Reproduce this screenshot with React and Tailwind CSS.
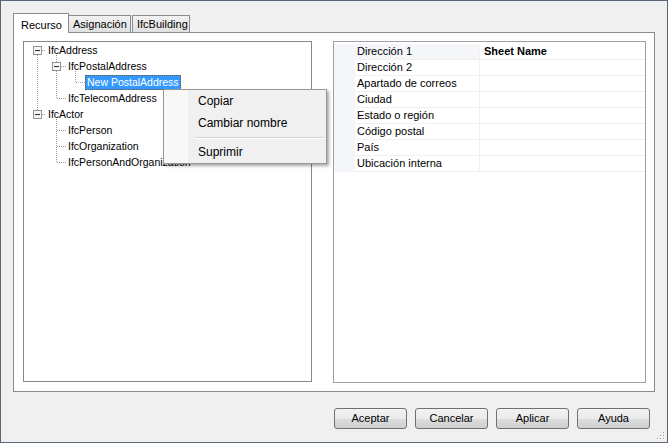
import React from 'react';

const treeRows = [
  { label: 'IfcAddress', level: 0 },
  { label: 'IfcPostalAddress', level: 1 },
  { label: 'New PostalAddress', level: 2, selected: true },
  { label: 'IfcTelecomAddress', level: 1 },
  { label: 'IfcActor', level: 0 },
  { label: 'IfcPerson', level: 1 },
  { label: 'IfcOrganization', level: 1 },
  { label: 'IfcPersonAndOrganization', level: 1 },
];

const levelMargin = ['ml-[22px]', 'ml-[42px]', 'ml-[61px]'];

const properties = [
  { name: 'Dirección 1', value: 'Sheet Name' },
  { name: 'Dirección 2' },
  { name: 'Apartado de correos' },
  { name: 'Ciudad' },
  { name: 'Estado o región' },
  { name: 'Código postal' },
  { name: 'País' },
  { name: 'Ubicación interna' },
];

const Expander = ({ x, y }) => (
  <g>
    <rect x={x + 0.5} y={y + 0.5} width="8" height="8" fill="#f7f7f7" stroke="#949494" />
    <line x1={x + 2} y1={y + 4.5} x2={x + 7} y2={y + 4.5} stroke="#1c2a44" />
  </g>
);

// dotted connectors of the tree, in coordinates of the tree's client area
const TreeLines = () => {
  const v = (x, y1, y2) => (
    <line x1={x + 0.5} y1={y1} x2={x + 0.5} y2={y2} stroke="#a0a0a0" strokeDasharray="1 1" />
  );
  const h = (y, x1, x2) => (
    <line x1={x1} y1={y + 0.5} x2={x2} y2={y + 0.5} stroke="#a0a0a0" strokeDasharray="1 1" />
  );
  return (
    <svg className="absolute left-0 top-0" width="287" height="200" shapeRendering="crispEdges">
      {v(13, 13, 68)}
      {h(8, 18, 22)}
      {h(72, 18, 22)}
      {v(32, 13, 20)}
      {v(32, 29, 57)}
      {h(24, 37, 42)}
      {h(56, 33, 42)}
      {v(51, 29, 41)}
      {h(40, 52, 61)}
      {v(32, 77, 121)}
      {h(88, 33, 42)}
      {h(104, 33, 42)}
      {h(120, 33, 42)}
      <Expander x={9} y={4} />
      <Expander x={28} y={20} />
      <Expander x={9} y={68} />
    </svg>
  );
};

const Button = ({ children }) => (
  <div className="flex h-[21px] w-[73px] items-center justify-center rounded-[3px] border border-[#707070] bg-[linear-gradient(to_bottom,#f2f2f2_0%,#ebebeb_50%,#dddddd_50%,#cfcfcf_100%)] text-[11px] text-black">
    {children}
  </div>
);

const App = () => {
  return (
    <div className="relative h-[443px] w-[668px] overflow-hidden border border-[#5a6776] bg-[#f0f0f0] pl-[12px] pt-[12px] font-['Liberation_Sans',Arial,sans-serif] text-black">
      <div className="relative z-10 flex h-[20px] items-end">
        <div className="flex h-[20px] w-[56px] items-start border border-b-0 border-[#898c95] bg-white pl-[7px] pt-[3px] text-[11px]">
          Recurso
        </div>
        <div className="mb-[1px] flex h-[17px] w-[62px] items-center border border-b-0 border-l-0 border-[#898c95] bg-[linear-gradient(to_bottom,#f2f2f2,#e0e0e0)] pl-[4px] text-[11px]">
          Asignación
        </div>
        <div className="mb-[1px] ml-[1px] flex h-[17px] w-[58px] items-center border border-b-0 border-[#898c95] bg-[linear-gradient(to_bottom,#f2f2f2,#e0e0e0)] pl-[4px] text-[11px]">
          IfcBuilding
        </div>
      </div>

      <div className="-mt-[1px] flex h-[360px] w-[642px] gap-[21px] border border-[#898c95] bg-white pl-[9px] pt-[8px]">
        <div className="relative h-[341px] w-[289px] border border-[#828790] bg-white">
          <TreeLines />
          <div className="relative flex flex-col text-[10.5px]">
            {treeRows.map((row) => (
              <div key={row.label} className="flex h-[16px] items-center">
                <span
                  className={`${levelMargin[row.level]} whitespace-nowrap border px-[1px] leading-[13px] ${
                    row.selected
                      ? 'border-dotted border-[#6b5a2a] bg-[#3399ff] text-white'
                      : 'border-transparent'
                  }`}
                >
                  {row.label}
                </span>
              </div>
            ))}
          </div>
        </div>

        <div className="h-[342px] w-[313px] border border-[#a0a0a0] bg-white">
          <div className="flex flex-col pt-[2px] text-[11px]">
            {properties.map((p, i) => (
              <div key={p.name} className="flex h-[16px]">
                <div className="w-[21px] bg-[#f4f6fa]" />
                <div
                  className={`flex w-[125px] items-center border-b border-r border-[#f0f0f0] pl-[2px] ${
                    i === 0 ? 'bg-[#f4f6fa]' : ''
                  }`}
                >
                  {p.name}
                </div>
                <div className="flex flex-1 items-center border-b border-[#f0f0f0] pl-[4px] font-bold">
                  {p.value}
                </div>
              </div>
            ))}
          </div>
        </div>
      </div>

      <div className="mt-[16px] flex justify-end gap-[8px] pr-[17px]">
        <Button>Aceptar</Button>
        <Button>Cancelar</Button>
        <Button>Aplicar</Button>
        <Button>Ayuda</Button>
      </div>

      <svg className="absolute bottom-[1px] right-[1px]" width="12" height="12" shapeRendering="crispEdges">
        {[
          [9, 9], [6, 9], [3, 9], [9, 6], [6, 6], [9, 3],
        ].map(([x, y]) => (
          <g key={`${x}-${y}`}>
            <rect x={x + 1} y={y + 1} width="1" height="1" fill="#ffffff" />
            <rect x={x} y={y} width="1" height="1" fill="#a0a0a0" />
          </g>
        ))}
      </svg>

      <div className="absolute left-[162px] top-[88px] z-20 w-[164px] border border-[#979797] bg-[linear-gradient(to_right,#f8f8f8_0px,#f8f8f8_24px,#f0f0f0_24px)] text-[12px] shadow-[2px_2px_3px_rgba(0,0,0,0.35)]">
        <div className="flex h-[22px] items-center pl-[34px]">Copiar</div>
        <div className="flex h-[22px] items-center pl-[34px]">Cambiar nombre</div>
        <div className="flex h-[7px] items-center pl-[31px]">
          <div className="h-[2px] w-full border-b border-t border-b-white border-t-[#d7d7d7]" />
        </div>
        <div className="flex h-[22px] items-center pl-[34px]">Suprimir</div>
      </div>
    </div>
  );
};

export default App;
